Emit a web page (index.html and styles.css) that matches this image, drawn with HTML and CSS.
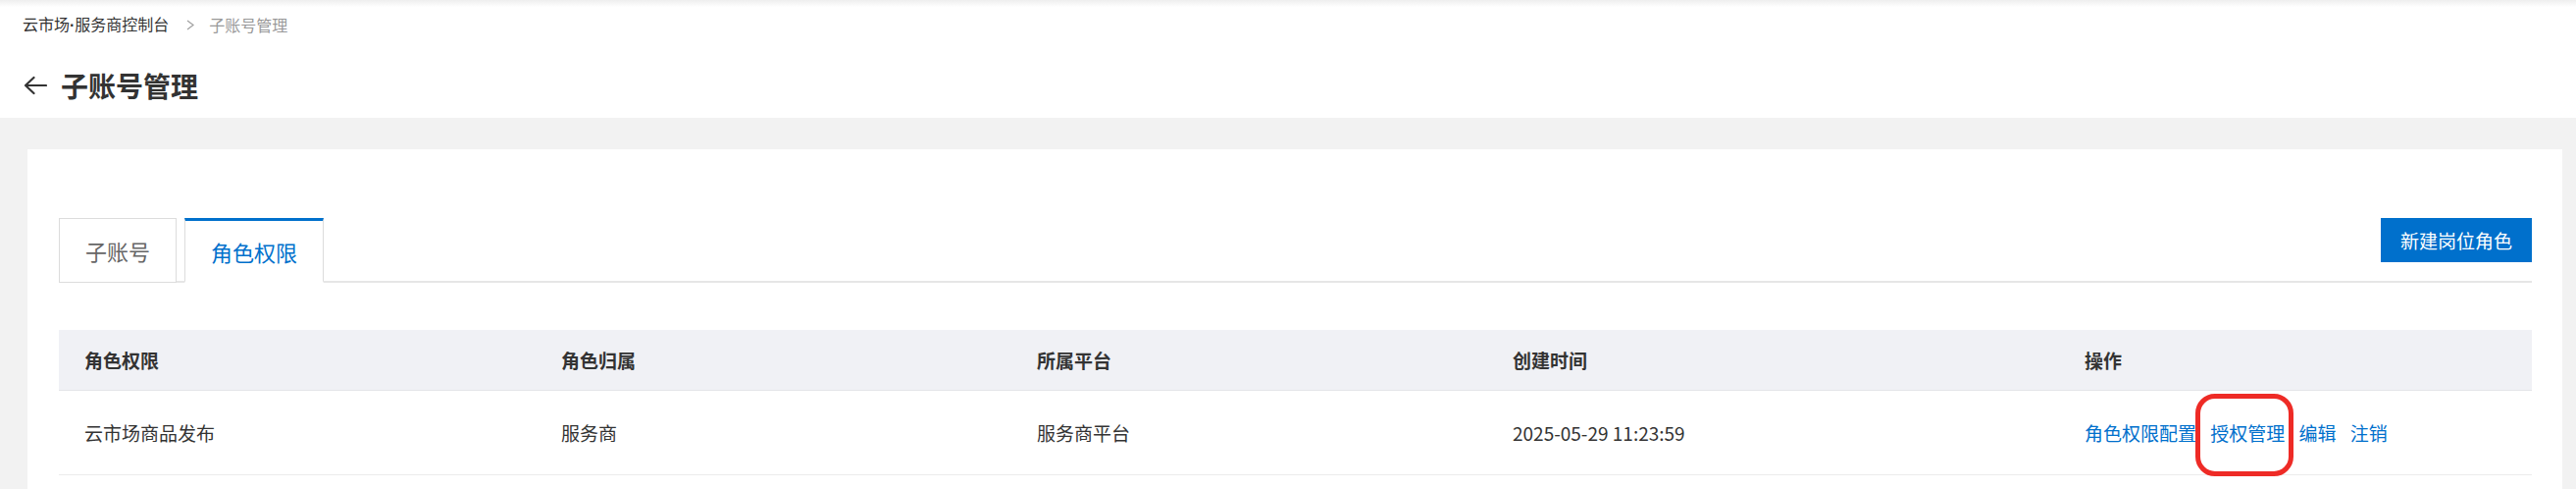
FILE: index.html
```html
<!DOCTYPE html>
<html lang="zh-CN">
<head>
  <meta charset="UTF-8">
  <title>子账号管理</title>
  <link rel="stylesheet" href="styles.css">
</head>
<body>

<div class="page-header">
  <div class="breadcrumb">
    <span class="crumb">云市场<span class="dot">·</span>服务商控制台</span>
    <svg class="crumb-sep" viewBox="0 0 8 11" width="8" height="11">
      <polyline points="1,1 7,5.5 1,10" fill="none" stroke="#a0a0a0" stroke-width="1.2"/>
    </svg>
    <span class="crumb current">子账号管理</span>
  </div>
  <div class="title-row">
    <svg class="back" viewBox="0 0 24 20" width="24" height="20">
      <path d="M2 10H23M10.5 2L2 10L10.5 18" fill="none" stroke="#333" stroke-width="2.2" stroke-linecap="round" stroke-linejoin="round"/>
    </svg>
    <h1>子账号管理</h1>
  </div>
</div>

<div class="content">
  <div class="card">
    <div class="tab-bar">
      <div class="tabs">
        <div class="tab">子账号</div>
        <div class="tab active">角色权限</div>
      </div>
      <button class="btn-primary">新建岗位角色</button>
    </div>

    <table class="grid">
      <colgroup>
        <col style="width: 486px">
        <col style="width: 485px">
        <col style="width: 485px">
        <col style="width: 583px">
        <col>
      </colgroup>
      <tr>
        <th>角色权限</th>
        <th>角色归属</th>
        <th>所属平台</th>
        <th>创建时间</th>
        <th>操作</th>
      </tr>
      <tr>
        <td>云市场商品发布</td>
        <td>服务商</td>
        <td>服务商平台</td>
        <td>2025-05-29 11:23:59</td>
        <td class="actions">
          <a href="#">角色权限配置</a>
          <a href="#" class="marked">授权管理</a>
          <a href="#">编辑</a>
          <a href="#">注销</a>
        </td>
      </tr>
    </table>
  </div>
</div>

</body>
</html>
```

FILE: styles.css
```css
body {
  margin: 0;
  background-color: #f2f2f2;
  font-family: "Noto Sans CJK SC", "Noto Sans", sans-serif;
  color: #333;
}
.page-header {
  height: 120px;
  box-sizing: border-box;
  padding: 13px 0 0 23px;
  background: linear-gradient(#eeeeee, #ffffff 7px);
}
.breadcrumb {
  display: flex;
  align-items: center;
  height: 24px;
  font-size: 16px;
  line-height: 24px;
}
.dot {
  font-family: "Liberation Sans", sans-serif;
  font-weight: bold;
}
.crumb-sep {
  margin: 0 15px 0 18px;
}
.crumb.current {
  color: #999;
}
.title-row {
  display: flex;
  align-items: center;
  margin-top: 30px;
  height: 40px;
}
.back {
  margin: 0 14px 0 1px;
}
.title-row h1 {
  margin: 0;
  font-size: 28px;
  line-height: 40px;
  font-weight: bold;
  color: #333;
}
.content {
  padding: 32px 14px 0 28px;
}
.card {
  background-color: #fff;
  padding: 70px 31px 60px 32px;
}
.tab-bar {
  display: flex;
  justify-content: space-between;
  align-items: flex-start;
  border-bottom: 2px solid #e6e6e6;
}
.tabs {
  display: flex;
  gap: 8px;
  margin-bottom: -2px;
}
.tab {
  display: flex;
  align-items: center;
  height: 66px;
  box-sizing: border-box;
  padding: 0 26px;
  border: 1px solid #dcdcdc;
  background-color: #fff;
  font-size: 22px;
  color: #666;
}
.tab.active {
  border-top: 3px solid #0070cc;
  border-bottom: 2px solid #fff;
  color: #0070cc;
}
.btn-primary {
  height: 45px;
  padding: 0 20px;
  border: none;
  background-color: #0070cc;
  color: #fff;
  font-family: inherit;
  font-size: 19px;
}
.grid {
  width: 100%;
  margin-top: 48px;
  border-collapse: collapse;
  table-layout: fixed;
  font-size: 19px;
}
.grid th, .grid td {
  padding: 0 26px;
  text-align: left;
  white-space: nowrap;
}
.grid th {
  height: 61px;
  background-color: #f0f1f5;
  border-bottom: 1px solid #e4e5e8;
  font-weight: bold;
  color: #333;
}
.grid td {
  height: 85px;
  border-bottom: 1px solid #ececec;
  color: #333;
}
.actions a {
  color: #0070cc;
  text-decoration: none;
  margin-right: 10px;
}
.actions a.marked {
  position: relative;
}
.actions a.marked::after {
  content: "";
  position: absolute;
  left: -15px;
  right: -9px;
  top: -26px;
  bottom: -31px;
  border: 5px solid #ee2b26;
  border-radius: 20px;
}
```
